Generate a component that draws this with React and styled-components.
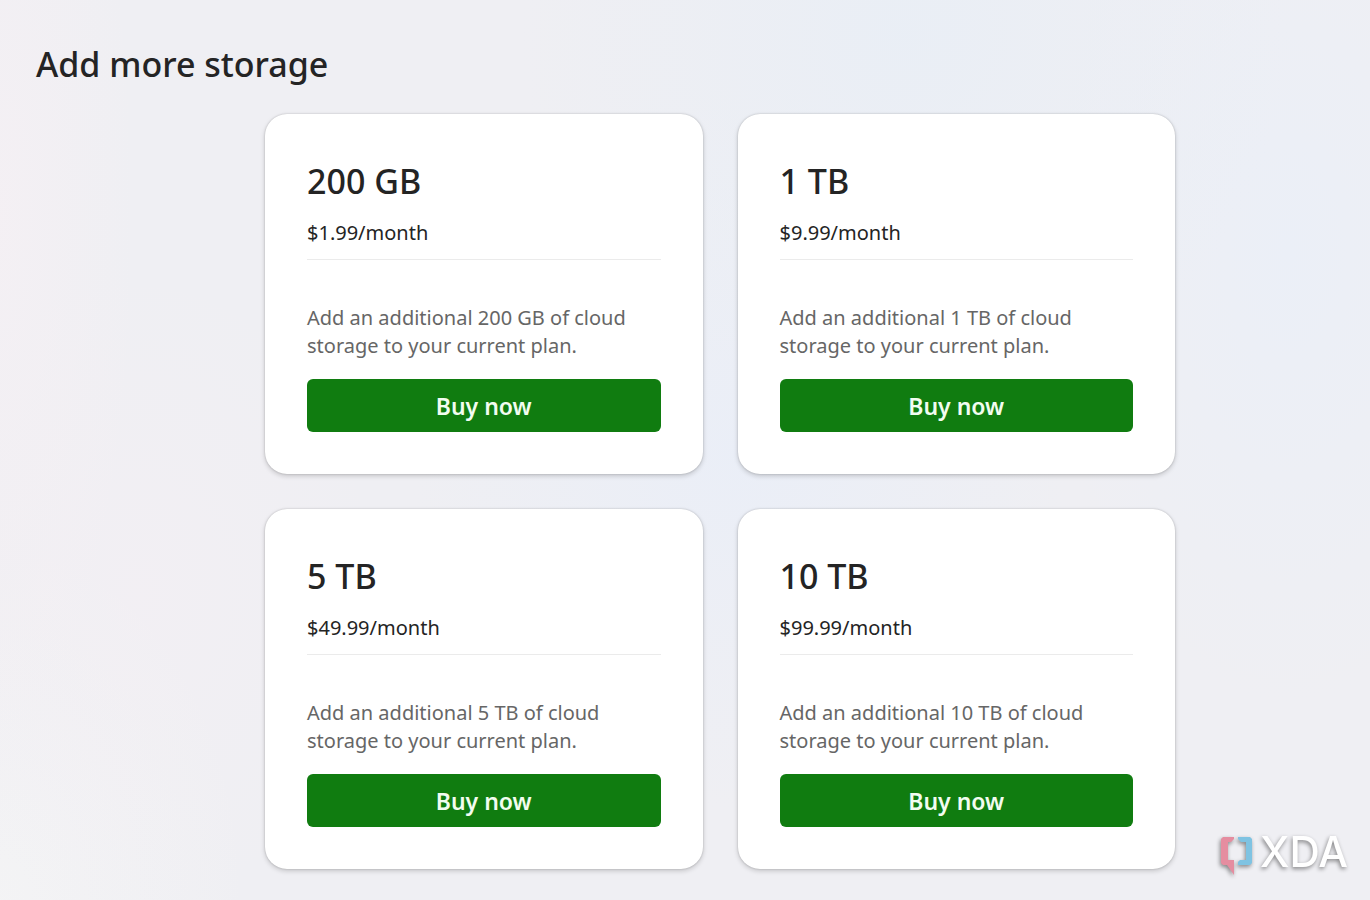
import React from "react";
import styled, { createGlobalStyle } from "styled-components";

const GlobalStyle = createGlobalStyle`
  *, *::before, *::after { box-sizing: border-box; }
  body {
    margin: 0;
    font-family: "Segoe UI", "Noto Sans", "Open Sans", sans-serif;
    color: #242424;
  }
`;

const Page = styled.main`
  position: relative;
  min-height: 100vh;
  padding: 36px 36px 31px;
  background-color: #efeff3;
  background-image:
    radial-gradient(ellipse 28% 42% at 66% 4%, rgba(232, 238, 246, 0.8), transparent),
    radial-gradient(ellipse 18% 50% at 94% 28%, rgba(234, 239, 248, 0.8), transparent),
    radial-gradient(ellipse 24% 40% at 54% 50%, rgba(233, 238, 248, 0.8), transparent),
    radial-gradient(ellipse 10% 60% at 0% 24%, rgba(246, 240, 244, 0.7), transparent),
    radial-gradient(ellipse 18% 36% at 10% 66%, rgba(244, 239, 244, 0.6), transparent),
    radial-gradient(ellipse 18% 40% at 0% 100%, rgba(244, 244, 245, 0.9), transparent);
`;

const PageTitle = styled.h1`
  margin: 0 0 22px;
  font-size: 34px;
  line-height: 56px;
  font-weight: 500;
`;

const PlanGrid = styled.section`
  display: grid;
  grid-template-columns: repeat(2, minmax(0, 1fr));
  gap: 35px;
  max-width: 980px;
  margin: 0 auto;
  padding-left: 70px;
`;

const Card = styled.article`
  padding: 42px;
  border-radius: 22px;
  background: #fff;
  box-shadow: 0 0 2px rgba(0, 0, 0, 0.2), 0 2px 5px rgba(0, 0, 0, 0.18);
`;

const PlanSize = styled.h2`
  margin: 0 0 13px;
  font-size: 34px;
  line-height: 50px;
  font-weight: 500;
`;

const Price = styled.p`
  margin: 0 0 44px;
  padding-bottom: 12px;
  border-bottom: 1px solid #ebebeb;
  font-size: 20px;
  line-height: 28px;
`;

const Description = styled.p`
  margin: 0 0 19px;
  font-size: 20px;
  line-height: 28px;
  color: #666;
`;

const BuyButton = styled.button`
  display: block;
  width: 100%;
  height: 53px;
  padding: 0;
  border: 0;
  border-radius: 6px;
  background: #107c10;
  color: #f2fdf0;
  font-family: inherit;
  font-size: 23px;
  font-weight: 600;
  line-height: 32px;
  cursor: pointer;
`;

const Watermark = styled.div`
  position: absolute;
  right: 22px;
  bottom: 22px;
  display: flex;
  gap: 6px;
  color: #fff;
  filter: drop-shadow(-1px 2px 2px rgba(0, 0, 0, 0.45));
`;

const WatermarkText = styled.span`
  font-family: Inter, sans-serif;
  font-size: 42px;
  line-height: 32px;
  font-weight: 500;
`;

const BracketMark = () => (
  <svg width="34" height="42" viewBox="0 0 34 42" aria-hidden="true">
    <path d="M3 1H14V3L11 6H8V24H14V39L7 29H3L1 27V3Z" fill="#e58da0" />
    <path d="M18 1H30L32 3V27L30 29H18V26L20 24H26V6H21L18 3Z" fill="#7fc3e2" />
  </svg>
);

const plans = [
  { size: "200 GB", price: "$1.99" },
  { size: "1 TB", price: "$9.99" },
  { size: "5 TB", price: "$49.99" },
  { size: "10 TB", price: "$99.99" },
];

const PlanCard = ({ size, price }) => (
  <Card>
    <PlanSize>{size}</PlanSize>
    <Price>{`${price}/month`}</Price>
    <Description>
      {`Add an additional ${size} of cloud storage to your current plan.`}
    </Description>
    <BuyButton type="button">Buy now</BuyButton>
  </Card>
);

export default function App() {
  return (
    <>
      <GlobalStyle />
      <Page>
        <PageTitle>Add more storage</PageTitle>
        <PlanGrid>
          {plans.map((plan) => (
            <PlanCard key={plan.size} {...plan} />
          ))}
        </PlanGrid>
        <Watermark>
          <BracketMark />
          <WatermarkText>XDA</WatermarkText>
        </Watermark>
      </Page>
    </>
  );
}
